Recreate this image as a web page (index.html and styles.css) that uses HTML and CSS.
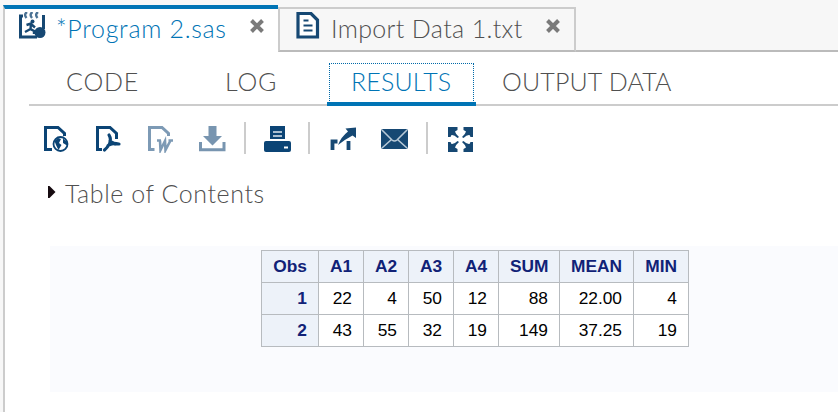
FILE: index.html
```html
<!DOCTYPE html>
<html lang="en">
<head>
<meta charset="utf-8">
<title>Program 2.sas</title>
<link rel="stylesheet" href="styles.css">
</head>
<body>
<header class="tabs">
  <div class="tab tab-active">
    <svg class="tab-icon" width="28" height="28" viewBox="0 0 28 28"><path d="M4 4H1.500V25H18M24.500 3V17" fill="none" stroke="#164873" stroke-width="3"/><path d="M8 0Q4.500 2.500 7.500 6M13.500 0Q10 2.500 13 6M19 0Q15.500 2.500 18.500 6" fill="none" stroke="#4b7294" stroke-width="2.400"/><circle cx="13.500" cy="9.500" r="2" fill="#164873"/><path d="M7.500 13L12 11.500L11.500 17L15 19V22M11.500 17L6 20M12 12L16 15.500" fill="none" stroke="#164873" stroke-width="2.400"/><circle cx="21" cy="20.500" r="5.500" fill="#164873"/></svg>
    <span class="tab-name name-program">*Program 2.sas</span>
    <svg class="close" width="16" height="16" viewBox="0 0 16 16"><path d="M2.500 2.500L13.500 13.500M13.500 2.500L2.500 13.500"/></svg>
  </div>
  <div class="tab tab-idle">
    <svg class="doc-icon" width="24" height="28" viewBox="0 0 24 28"><path d="M2 1.500H15L21.500 8V25H2Z" fill="#fff" stroke="#164873" stroke-width="3.200"/><path d="M7.500 8.500H12.500M7.500 13.500H16.500M7.500 18.500H16.500" stroke="#164873" stroke-width="1.800"/></svg>
    <span class="tab-name name-import">Import Data 1.txt</span>
    <svg class="close" width="16" height="16" viewBox="0 0 16 16"><path d="M2.500 2.500L13.500 13.500M13.500 2.500L2.500 13.500"/></svg>
  </div>
  <div class="tabs-rest"></div>
</header>
<main class="content">
  <nav class="views">
    <span class="view view-code">CODE</span>
    <span class="view view-log">LOG</span>
    <span class="view view-results"><span class="results-text">RESULTS</span></span>
    <span class="view view-output">OUTPUT DATA</span>
  </nav>
  <div class="toolbar">
    <svg class="tool t-html" width="28" height="28" viewBox="0 0 28 28"><path d="M9 24.500H2.500V2.500H15L21.500 8.500V11" fill="none" stroke="#0b4475" stroke-width="3"/><circle cx="17.500" cy="19" r="7" fill="#fff" stroke="#0b4475" stroke-width="1.800"/><path d="M11.500 16L15 13L18 14L16 18L18.500 20L15.500 25L13 20ZM20 13.500L24 17V20.500L20 18Z" fill="#0b4475"/></svg>
    <svg class="tool t-pdf" width="28" height="28" viewBox="0 0 28 28"><path d="M7 24.500H2.500V2.500H15L21.500 8.500V14" fill="none" stroke="#0b4475" stroke-width="3"/><path d="M14 10Q16.500 14 14.500 19Q12 23 9.500 25M15 16Q18 19 24 19M13 20.500Q17 18 20 19" fill="none" stroke="#0b4475" stroke-width="3.200" stroke-linecap="round"/></svg>
    <svg class="tool t-word" width="28" height="28" viewBox="0 0 28 28"><path d="M7.500 24.500H2.500V2.500H15L21.500 8.500V11" fill="none" stroke="#7d9ab5" stroke-width="3"/><path d="M10 15.500H14M13 15.500L13.500 25L18 16L18.500 25L23.500 15.500M21.500 15.500H26" fill="none" stroke="#7d9ab5" stroke-width="2.600"/></svg>
    <svg class="tool t-save" width="28" height="28" viewBox="0 0 28 28"><path d="M9.500 1H17.500V11H23L13.500 20.500L4 11H9.500Z" fill="#7895b0"/><path d="M1.500 17V24.800H25V17" fill="none" stroke="#7895b0" stroke-width="3"/></svg>
    <i class="rule r1"></i>
    <svg class="tool t-print" width="28" height="28" viewBox="0 0 28 28"><path d="M6 1H21V14H6Z" fill="#0b4475"/><path d="M9 7H18M9 11H18" stroke="#e0e8ef" stroke-width="1.500"/><rect x="0" y="16" width="27" height="11" rx="2" fill="#0b4475"/><path d="M20 22.500H24" stroke="#fff" stroke-width="2"/></svg>
    <i class="rule r2"></i>
    <svg class="tool t-open" width="28" height="28" viewBox="0 0 28 28"><path d="M2.500 25V16.500H7.500M18.500 25V16" fill="none" stroke="#164873" stroke-width="3.800"/><path d="M8 20Q11 12 18 6.500L15.500 3.500L26 2.500V13L22.500 10.500Q14 15 8 20Z" fill="#164873"/></svg>
    <svg class="tool t-mail" width="28" height="28" viewBox="0 0 28 28"><rect x="0" y="4" width="27" height="20" rx="2" fill="#164873"/><path d="M1 5L11 15Q13.500 17 16 15L26 5M1 23L10.500 14.500M26 23L16.500 14.500" fill="none" stroke="#b8c9d7" stroke-width="1.600"/></svg>
    <i class="rule r3"></i>
    <svg class="tool t-full" width="28" height="28" viewBox="0 0 28 28"><g fill="#164873"><path d="M1 2H10.500V5L8 6.500Q8.500 9 12 12L10.500 13Q7 9.500 4.500 10L3.500 12H1Z"/><path d="M26 2H16.500V5L19 6.500Q18.500 9 15 12L16.500 13Q20 9.500 22.500 10L23.500 12H26Z"/><path d="M1 27H10.500V24L8 22.500Q8.500 20 12 17L10.500 16Q7 19.500 4.500 19L3.500 17H1Z"/><path d="M26 27H16.500V24L19 22.500Q18.500 20 15 17L16.500 16Q20 19.500 22.500 19L23.500 17H26Z"/></g></svg>
  </div>
  <div class="contents">
    <svg width="8" height="12" viewBox="0 0 8 12"><path d="M0 0H1.500L7.500 6L1.500 12H0Z" fill="#160b10"/></svg>
    <span class="contents-text">Table of Contents</span>
  </div>
  <section class="report">
    <table>
      <colgroup><col class="w57"><col class="w45"><col class="w45"><col class="w45"><col class="w45"><col class="w61"><col class="w74"><col class="w55"></colgroup>
      <thead><tr><th>Obs</th><th>A1</th><th>A2</th><th>A3</th><th>A4</th><th>SUM</th><th>MEAN</th><th>MIN</th></tr></thead>
      <tbody>
        <tr><th>1</th><td>22</td><td>4</td><td>50</td><td>12</td><td>88</td><td>22.00</td><td>4</td></tr>
        <tr><th>2</th><td>43</td><td>55</td><td>32</td><td>19</td><td>149</td><td>37.25</td><td>19</td></tr>
      </tbody>
    </table>
  </section>
</main>
</body>
</html>
```
FILE: styles.css
```css
* { box-sizing: border-box; }
body {
  margin: 0;
  height: 412px;
  overflow: hidden;
  background: #f7f7f7;
  color: #505050;
  font-family: Lato, "Open Sans", sans-serif;
  font-weight: 300;
  font-size: 25px;
  line-height: 30px;
  white-space: nowrap;
}
svg { display: block; flex: none; }
.tabs { display: flex; height: 52px; padding: 5px 0 0 3px; }
.tab { display: flex; flex: none; }
.tab-active {
  width: 275px;
  background: #fff;
  border-top: 4px solid #0074b5;
  border-left: 2px solid #ccc;
  color: #0074b5;
}
.tab-icon { margin: 3px 0 0 14px; }
.tab-idle {
  width: 298px;
  height: 45px;
  margin-top: 2px;
  border: 2px solid #ccc;
  border-bottom-color: #bbb;
}
.doc-icon { margin: 3px 0 0 16px; }
.tab-name { flex: none; margin-top: 4px; }
.name-program { width: 191px; padding-left: 9px; letter-spacing: 0.7px; }
.name-import { width: 205px; padding-left: 11px; letter-spacing: 0.35px; }
.close { margin: 9px 13px 0 auto; fill: none; stroke: #7a7a7a; stroke-width: 4; }
.tabs-rest { flex: 1; border-bottom: 2px solid #bbb; }
.content { height: 360px; margin-left: 3px; border-left: 2px solid #ccc; background: #fff; }
.views { display: flex; height: 54px; margin-left: 24px; border-bottom: 2px solid #ccc; }
.view { flex: none; padding-top: 14px; }
.view-code { width: 159px; padding-left: 37px; letter-spacing: 0.8px; }
.view-log { width: 139px; padding-left: 37px; letter-spacing: 0.8px; }
.view-results {
  width: 149px;
  height: 54px;
  padding: 11px 2px 0;
  border-bottom: 4px solid #0074b5;
  color: #0074b5;
}
.results-text { display: block; height: 40px; padding: 2px 0 0 21px; border: 1px dotted #0069a8; border-bottom: 0; letter-spacing: 0.15px; }
.view-output { padding-left: 26px; letter-spacing: 0.15px; }
.toolbar { display: flex; height: 58px; padding: 19px 0 0 38px; }
.tool { margin-right: 24px; }
.t-save { margin-right: 17px; }
.rule { width: 2px; height: 32px; margin-top: -3px; background: #ccc; }
.r1 { margin-right: 18px; }
.t-print { margin-right: 16px; }
.r2 { margin-right: 20px; }
.t-open { margin-right: 23px; }
.t-mail { margin-right: 17px; }
.r3 { margin-right: 19px; }
.contents { display: flex; padding-left: 43px; height: 82px; }
.contents svg { margin-top: 22px; }
.contents-text { margin: 14px 0 0 9px; letter-spacing: 0.58px; }
.report { height: 146px; margin-left: 45px; padding: 4px 0 0 211px; background: #fafbfe; }
table {
  width: 428px;
  border-collapse: collapse;
  table-layout: fixed;
  font: 17.330px/20px "Liberation Sans", Arial, sans-serif;
  color: #000;
}
th, td { height: 32px; padding: 0 11px 2px; border: 1px solid #b7bbbf; background: #fff; text-align: right; }
th { background: #edf2f9; color: #112277; font-weight: 700; }
.w57 { width: 57px; }
.w45 { width: 45px; }
.w61 { width: 61px; }
.w74 { width: 74px; }
.w55 { width: 55px; }
```
